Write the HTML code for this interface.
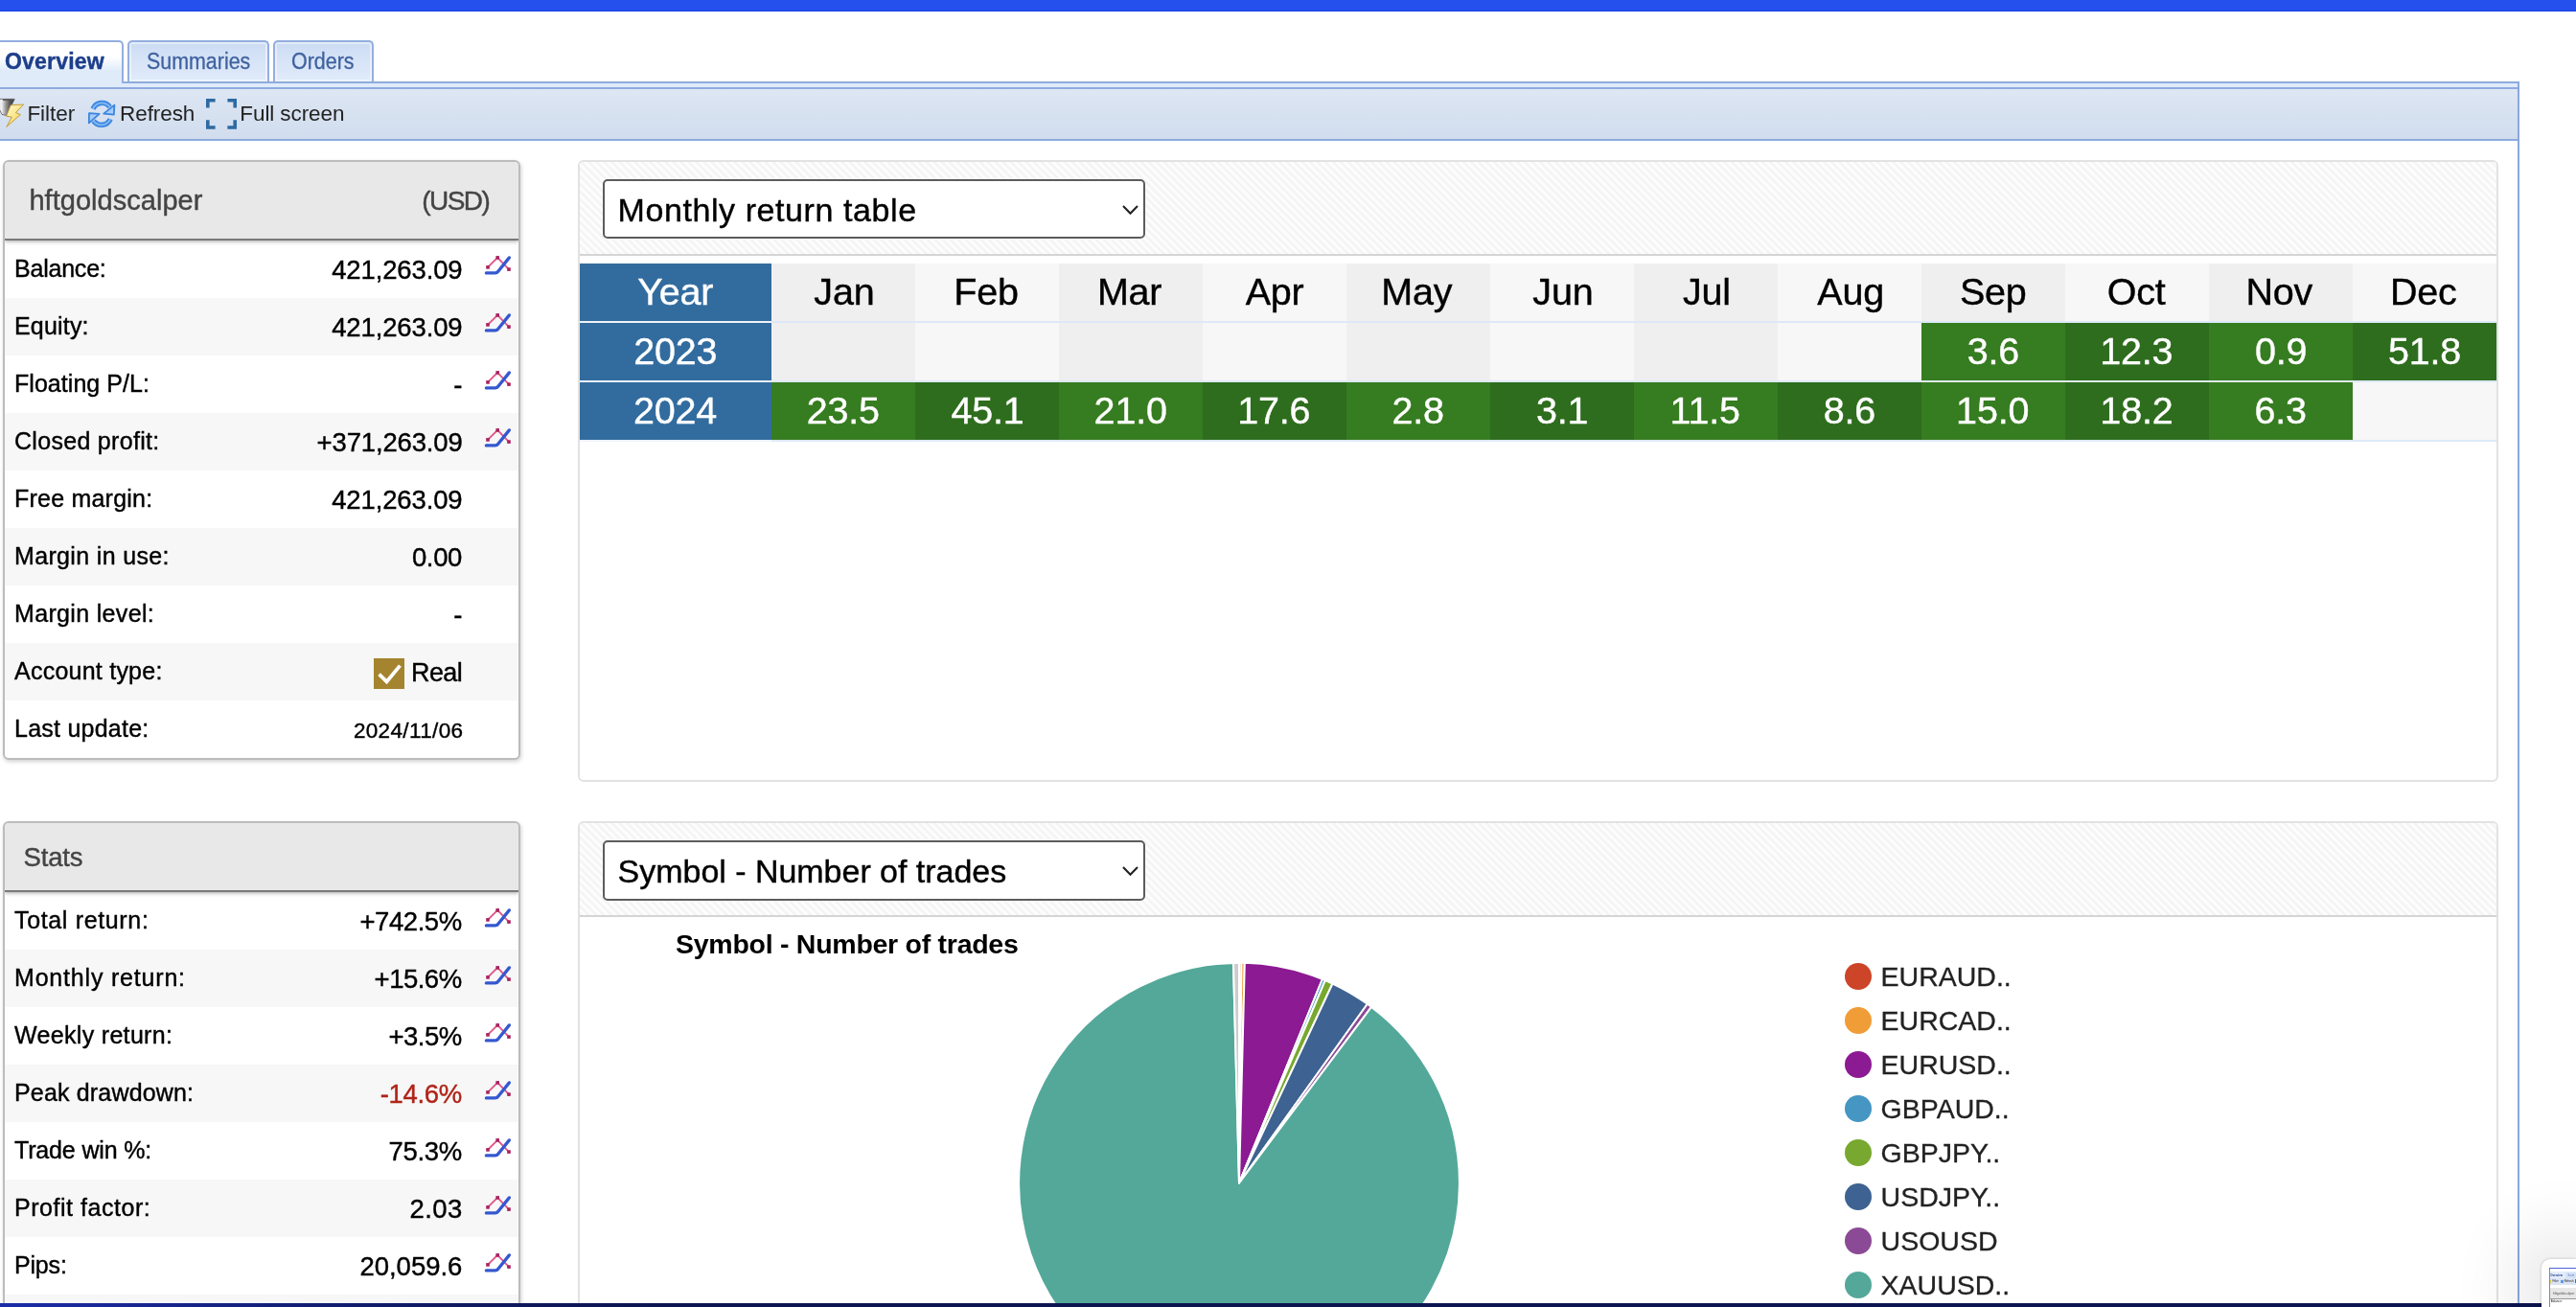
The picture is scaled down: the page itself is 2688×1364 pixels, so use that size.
<!DOCTYPE html>
<html><head><meta charset="utf-8"><title>Overview</title>
<style>
html,body{margin:0;padding:0;}
html{overflow:hidden;width:2688px;height:1364px;background:#fff;}
body{opacity:.999;width:2688px;height:1364px;position:relative;overflow:hidden;background:#fff;font-family:"Liberation Sans",sans-serif;}
.t{position:absolute;white-space:pre;line-height:1;}
.n{-webkit-text-stroke:.4px currentColor;}
.n2{-webkit-text-stroke:.3px currentColor;}
.a{position:absolute;}
.row{position:absolute;left:5px;width:536px;height:60px;}
.g{background:#f7f7f7;}
.pnl{position:absolute;left:3px;width:536px;border:2px solid #bcbcbc;border-radius:6px;box-shadow:1px 2px 4px rgba(0,0,0,.18);background:#fff;overflow:hidden;}
.ph{position:absolute;left:0;top:0;width:536px;background:#e8e8e8;border-bottom:2px solid #7a7a7a;box-shadow:0 1px 4px rgba(0,0,0,.35);}
.rp{position:absolute;left:603px;width:2000px;border:2px solid #e2e2e2;border-radius:6px;background:#fff;overflow:hidden;}
.rh{position:absolute;left:0;top:0;width:2000px;height:96px;border-bottom:2px solid #d4d4d4;background:repeating-linear-gradient(45deg,#f4f4f4 0,#f5f5f5 2px,#fdfdfd 2.8px,#fdfdfd 5px,#f4f4f4 5.66px);}
.sel{position:absolute;left:24px;top:18px;width:562px;height:58px;border:2px solid #5c5c5c;border-radius:5px;background:#fff;}
.tab{position:absolute;top:42px;height:41px;border:2px solid #93afe0;border-bottom:none;border-radius:5px 5px 0 0;}
.c{position:absolute;height:60px;}
</style></head><body>
<div class="a" style="left:0;top:0;width:2688px;height:12px;background:linear-gradient(#2550ed 0,#2550ed 10.6px,#1541e6 11.2px,#1541e6 12px)"></div>
<div class="a" style="left:0;top:85px;width:2629px;height:2px;background:#8dabde"></div>
<div class="a" style="left:0;top:87px;width:2627px;height:4px;background:#e0ebfa"></div>
<div class="tab" style="left:-10px;width:135px;height:43px;background:linear-gradient(#fff 0,#fff 35%,#e0ebfa 70%,#e0ebfa 100%)"></div>
<div class="tab" style="left:133px;width:144px;background:linear-gradient(#cbdbf3 0,#d6e3f7 40%,#e0ebfa 100%);box-shadow:inset 0 0 0 2px rgba(255,255,255,.45)"></div>
<div class="tab" style="left:285px;width:101px;background:linear-gradient(#cbdbf3 0,#d6e3f7 40%,#e0ebfa 100%);box-shadow:inset 0 0 0 2px rgba(255,255,255,.45)"></div>
<span class="t" style="left:4.92px;top:53.00px;font-size:23px;color:#1d3e8a;letter-spacing:0.218px;font-weight:bold;-webkit-text-stroke:0.4px #1d3e8a;">Overview</span>
<span class="t" style="left:152.77px;top:53.00px;font-size:23.5px;color:#3f629f;transform:scaleX(0.9112);transform-origin:0 0;-webkit-text-stroke:.3px #3f629f;">Summaries</span>
<span class="t" style="left:304.17px;top:53.00px;font-size:23.5px;color:#3f629f;transform:scaleX(0.9131);transform-origin:0 0;-webkit-text-stroke:.3px #3f629f;">Orders</span>
<div class="a" style="left:0;top:91px;width:2627px;height:52px;border:2px solid #8dabde;border-left:none;background:linear-gradient(#dee7f4 0,#d9e3f1 30%,#d1ddee 100%)"></div>
<svg class="a" style="left:0;top:96px" width="260" height="46" viewBox="0 96 260 46">
<defs>
<linearGradient id="fg" x1="0" y1="0" x2="1" y2="0"><stop offset="0" stop-color="#cfcfcf"/><stop offset=".36" stop-color="#f2f2f2"/><stop offset=".56" stop-color="#9a9a9a"/><stop offset=".8" stop-color="#4e4e4e"/><stop offset="1" stop-color="#3c3c3c"/></linearGradient>
<linearGradient id="lg" x1="0" y1="0" x2="1" y2="1"><stop offset="0" stop-color="#fffbd2"/><stop offset=".5" stop-color="#fbe68a"/><stop offset="1" stop-color="#e9b92c"/></linearGradient>
<linearGradient id="rg" x1="0" y1="0" x2="0" y2="1"><stop offset="0" stop-color="#3f86de"/><stop offset=".5" stop-color="#8fc0f4"/><stop offset="1" stop-color="#3f86de"/></linearGradient>
</defs>
<path d="M-6 103.4 L15.2 103.4 L6.9 120.6 L2 119.4 Z" fill="url(#fg)" stroke="#5a5a5a" stroke-width=".8"/><path d="M3 104.2 L14.4 104.2" stroke="#555" stroke-width="1.4"/>
<path d="M11.2 109.8 L24.6 109 L16.4 117.6 L21.3 119.6 L6.8 132.4 L12.4 122.2 L6.6 121.2 Z" fill="url(#lg)" stroke="#c49b3a" stroke-width="1"/>
<g fill="none" stroke-linecap="butt">
<path d="M97.0 113.6 A10.2 10.2 0 0 1 114.6 111.6" stroke="#3b85e0" stroke-width="5.4"/>
<path d="M115.2 124.2 A10.2 10.2 0 0 1 97.6 126.2" stroke="#3b85e0" stroke-width="5.4"/>
<path d="M97.0 113.6 A10.2 10.2 0 0 1 114.6 111.6" stroke="#7db6f3" stroke-width="2"/>
<path d="M115.2 124.2 A10.2 10.2 0 0 1 97.6 126.2" stroke="#7db6f3" stroke-width="2"/>
</g>
<path d="M119.4 109.6 L118.8 119.6 L108.2 118.6 Z" fill="#a6cdf8" stroke="#3b85e0" stroke-width="1.8" stroke-linejoin="round"/>
<path d="M92.8 128.4 L93.0 118.2 L103.6 118.8 Z" fill="#a6cdf8" stroke="#3b85e0" stroke-width="1.8" stroke-linejoin="round"/>
<g fill="none" stroke="#2d6aa3" stroke-width="3.6">
<path d="M224.6 104.8 H216.8 V112.6"/><path d="M237.4 104.8 H245.2 V112.6"/>
<path d="M224.6 133 H216.8 V125.2"/><path d="M237.4 133 H245.2 V125.2"/>
</g>
</svg>
<span class="t" style="left:28.43px;top:108.00px;font-size:22.5px;color:#222;letter-spacing:-0.050px;">Filter</span>
<span class="t" style="left:125.12px;top:108.00px;font-size:22.5px;color:#222;letter-spacing:-0.100px;">Refresh</span>
<span class="t" style="left:250.32px;top:108.00px;font-size:22.5px;color:#222;letter-spacing:-0.095px;">Full screen</span>
<div class="pnl" style="top:167px;height:622px"><div class="ph" style="height:80px"></div></div>
<div class="row g" style="top:311px;height:60px"></div>
<div class="row g" style="top:431px;height:60px"></div>
<div class="row g" style="top:551px;height:60px"></div>
<div class="row g" style="top:671px;height:60px"></div>
<span class="t n" style="left:30.40px;top:195.00px;font-size:29px;color:#444;letter-spacing:0.037px;">hftgoldscalper</span>
<span class="t n" style="left:440.15px;top:196.00px;font-size:28px;color:#444;letter-spacing:-1.519px;">(USD)</span>
<span class="t n" style="left:15.00px;top:268.00px;font-size:25px;color:#000;letter-spacing:-0.214px;">Balance:</span>
<span class="t n" style="left:346.18px;top:268.00px;font-size:27.5px;color:#000;letter-spacing:-0.128px;">421,263.09</span>
<svg class="a" style="left:504px;top:265px;filter:blur(.7px)" width="32" height="26" viewBox="0 0 32 26">
<path d="M5 13.9 L15.2 3.9 L27 16.1" fill="none" stroke="#e2588c" stroke-width="1.9"/>
<path d="M3.4 19.9 L12.6 19.9 Q14.6 19.9 16 18 L27.4 3.9" fill="none" stroke="#3558d0" stroke-width="3.3" stroke-linejoin="round" stroke-linecap="round"/>
<rect x="3.2" y="12.1" width="3.6" height="3.6" fill="#a8245f"/><rect x="13.4" y="2.1" width="3.6" height="3.6" fill="#a8245f"/><rect x="25.2" y="14.3" width="3.6" height="3.6" fill="#a8245f"/>
</svg>
<span class="t n" style="left:15.00px;top:328.00px;font-size:25px;color:#000;letter-spacing:0.179px;">Equity:</span>
<span class="t n" style="left:346.18px;top:328.00px;font-size:27.5px;color:#000;letter-spacing:-0.128px;">421,263.09</span>
<svg class="a" style="left:504px;top:325px;filter:blur(.7px)" width="32" height="26" viewBox="0 0 32 26">
<path d="M5 13.9 L15.2 3.9 L27 16.1" fill="none" stroke="#e2588c" stroke-width="1.9"/>
<path d="M3.4 19.9 L12.6 19.9 Q14.6 19.9 16 18 L27.4 3.9" fill="none" stroke="#3558d0" stroke-width="3.3" stroke-linejoin="round" stroke-linecap="round"/>
<rect x="3.2" y="12.1" width="3.6" height="3.6" fill="#a8245f"/><rect x="13.4" y="2.1" width="3.6" height="3.6" fill="#a8245f"/><rect x="25.2" y="14.3" width="3.6" height="3.6" fill="#a8245f"/>
</svg>
<span class="t n" style="left:15.00px;top:388.00px;font-size:25px;color:#000;letter-spacing:0.042px;">Floating P/L:</span>
<span class="t n" style="left:473.25px;top:388.00px;font-size:27.5px;color:#000;">-</span>
<svg class="a" style="left:504px;top:385px;filter:blur(.7px)" width="32" height="26" viewBox="0 0 32 26">
<path d="M5 13.9 L15.2 3.9 L27 16.1" fill="none" stroke="#e2588c" stroke-width="1.9"/>
<path d="M3.4 19.9 L12.6 19.9 Q14.6 19.9 16 18 L27.4 3.9" fill="none" stroke="#3558d0" stroke-width="3.3" stroke-linejoin="round" stroke-linecap="round"/>
<rect x="3.2" y="12.1" width="3.6" height="3.6" fill="#a8245f"/><rect x="13.4" y="2.1" width="3.6" height="3.6" fill="#a8245f"/><rect x="25.2" y="14.3" width="3.6" height="3.6" fill="#a8245f"/>
</svg>
<span class="t n" style="left:15.00px;top:448.00px;font-size:25px;color:#000;letter-spacing:0.300px;">Closed profit:</span>
<span class="t n" style="left:330.62px;top:448.00px;font-size:27.5px;color:#000;letter-spacing:-0.160px;">+371,263.09</span>
<svg class="a" style="left:504px;top:445px;filter:blur(.7px)" width="32" height="26" viewBox="0 0 32 26">
<path d="M5 13.9 L15.2 3.9 L27 16.1" fill="none" stroke="#e2588c" stroke-width="1.9"/>
<path d="M3.4 19.9 L12.6 19.9 Q14.6 19.9 16 18 L27.4 3.9" fill="none" stroke="#3558d0" stroke-width="3.3" stroke-linejoin="round" stroke-linecap="round"/>
<rect x="3.2" y="12.1" width="3.6" height="3.6" fill="#a8245f"/><rect x="13.4" y="2.1" width="3.6" height="3.6" fill="#a8245f"/><rect x="25.2" y="14.3" width="3.6" height="3.6" fill="#a8245f"/>
</svg>
<span class="t n" style="left:15.00px;top:508.00px;font-size:25px;color:#000;letter-spacing:0.220px;">Free margin:</span>
<span class="t n" style="left:346.18px;top:508.00px;font-size:27.5px;color:#000;letter-spacing:-0.128px;">421,263.09</span>
<span class="t n" style="left:15.00px;top:568.00px;font-size:25px;color:#000;letter-spacing:0.342px;">Margin in use:</span>
<span class="t n" style="left:429.90px;top:568.00px;font-size:27.5px;color:#000;letter-spacing:-0.333px;">0.00</span>
<span class="t n" style="left:15.00px;top:628.00px;font-size:25px;color:#000;letter-spacing:0.335px;">Margin level:</span>
<span class="t n" style="left:473.25px;top:628.00px;font-size:27.5px;color:#000;">-</span>
<span class="t n" style="left:15.00px;top:688.00px;font-size:25px;color:#000;letter-spacing:0.240px;">Account type:</span>
<span class="t n" style="left:15.00px;top:748.00px;font-size:25px;color:#000;letter-spacing:0.241px;">Last update:</span>
<div class="a" style="left:390px;top:687px;width:32px;height:32px;background:#a5842f"></div>
<svg class="a" style="left:390px;top:687px" width="32" height="32" viewBox="0 0 32 32"><path d="M5.6 16.6 L13.5 24.4 L27.4 7.6" fill="none" stroke="#fff" stroke-width="3.8"/></svg>
<span class="t n" style="left:429.05px;top:689.00px;font-size:27px;color:#000;letter-spacing:-0.633px;">Real</span>
<span class="t n" style="left:368.88px;top:752.00px;font-size:22.5px;color:#000;letter-spacing:0.361px;">2024/11/06</span>
<div class="pnl" style="top:857px;height:505px;border-bottom:none;border-radius:6px 6px 0 0"><div class="ph" style="height:70px"></div></div>
<div class="row g" style="top:991px;height:60px"></div>
<div class="row g" style="top:1111px;height:60px"></div>
<div class="row g" style="top:1231px;height:60px"></div>
<div class="row g" style="top:1351px;height:13px"></div>
<span class="t n" style="left:24.55px;top:881.00px;font-size:27.5px;color:#444;letter-spacing:-0.169px;">Stats</span>
<span class="t n" style="left:15.00px;top:948.00px;font-size:25px;color:#000;letter-spacing:0.654px;">Total return:</span>
<span class="t n" style="left:375.43px;top:948.00px;font-size:27.5px;color:#000;letter-spacing:-0.433px;">+742.5%</span>
<svg class="a" style="left:503.5px;top:945.5px;filter:blur(.7px)" width="32" height="26" viewBox="0 0 32 26">
<path d="M5 13.9 L15.2 3.9 L27 16.1" fill="none" stroke="#e2588c" stroke-width="1.9"/>
<path d="M3.4 19.9 L12.6 19.9 Q14.6 19.9 16 18 L27.4 3.9" fill="none" stroke="#3558d0" stroke-width="3.3" stroke-linejoin="round" stroke-linecap="round"/>
<rect x="3.2" y="12.1" width="3.6" height="3.6" fill="#a8245f"/><rect x="13.4" y="2.1" width="3.6" height="3.6" fill="#a8245f"/><rect x="25.2" y="14.3" width="3.6" height="3.6" fill="#a8245f"/>
</svg>
<span class="t n" style="left:15.00px;top:1008.00px;font-size:25px;color:#000;letter-spacing:0.809px;">Monthly return:</span>
<span class="t n" style="left:390.62px;top:1008.00px;font-size:27.5px;color:#000;letter-spacing:-0.510px;">+15.6%</span>
<svg class="a" style="left:503.5px;top:1005.5px;filter:blur(.7px)" width="32" height="26" viewBox="0 0 32 26">
<path d="M5 13.9 L15.2 3.9 L27 16.1" fill="none" stroke="#e2588c" stroke-width="1.9"/>
<path d="M3.4 19.9 L12.6 19.9 Q14.6 19.9 16 18 L27.4 3.9" fill="none" stroke="#3558d0" stroke-width="3.3" stroke-linejoin="round" stroke-linecap="round"/>
<rect x="3.2" y="12.1" width="3.6" height="3.6" fill="#a8245f"/><rect x="13.4" y="2.1" width="3.6" height="3.6" fill="#a8245f"/><rect x="25.2" y="14.3" width="3.6" height="3.6" fill="#a8245f"/>
</svg>
<span class="t n" style="left:15.00px;top:1068.00px;font-size:25px;color:#000;letter-spacing:0.325px;">Weekly return:</span>
<span class="t n" style="left:405.52px;top:1068.00px;font-size:27.5px;color:#000;letter-spacing:-0.519px;">+3.5%</span>
<svg class="a" style="left:503.5px;top:1065.5px;filter:blur(.7px)" width="32" height="26" viewBox="0 0 32 26">
<path d="M5 13.9 L15.2 3.9 L27 16.1" fill="none" stroke="#e2588c" stroke-width="1.9"/>
<path d="M3.4 19.9 L12.6 19.9 Q14.6 19.9 16 18 L27.4 3.9" fill="none" stroke="#3558d0" stroke-width="3.3" stroke-linejoin="round" stroke-linecap="round"/>
<rect x="3.2" y="12.1" width="3.6" height="3.6" fill="#a8245f"/><rect x="13.4" y="2.1" width="3.6" height="3.6" fill="#a8245f"/><rect x="25.2" y="14.3" width="3.6" height="3.6" fill="#a8245f"/>
</svg>
<span class="t n" style="left:15.00px;top:1128.00px;font-size:25px;color:#000;letter-spacing:0.169px;">Peak drawdown:</span>
<span class="t n" style="left:396.75px;top:1128.00px;font-size:27.5px;color:#b02418;letter-spacing:-0.335px;">-14.6%</span>
<svg class="a" style="left:503.5px;top:1125.5px;filter:blur(.7px)" width="32" height="26" viewBox="0 0 32 26">
<path d="M5 13.9 L15.2 3.9 L27 16.1" fill="none" stroke="#e2588c" stroke-width="1.9"/>
<path d="M3.4 19.9 L12.6 19.9 Q14.6 19.9 16 18 L27.4 3.9" fill="none" stroke="#3558d0" stroke-width="3.3" stroke-linejoin="round" stroke-linecap="round"/>
<rect x="3.2" y="12.1" width="3.6" height="3.6" fill="#a8245f"/><rect x="13.4" y="2.1" width="3.6" height="3.6" fill="#a8245f"/><rect x="25.2" y="14.3" width="3.6" height="3.6" fill="#a8245f"/>
</svg>
<span class="t n" style="left:15.00px;top:1188.00px;font-size:25px;color:#000;letter-spacing:-0.157px;">Trade win %:</span>
<span class="t n" style="left:405.52px;top:1188.00px;font-size:27.5px;color:#000;letter-spacing:-0.331px;">75.3%</span>
<svg class="a" style="left:503.5px;top:1185.5px;filter:blur(.7px)" width="32" height="26" viewBox="0 0 32 26">
<path d="M5 13.9 L15.2 3.9 L27 16.1" fill="none" stroke="#e2588c" stroke-width="1.9"/>
<path d="M3.4 19.9 L12.6 19.9 Q14.6 19.9 16 18 L27.4 3.9" fill="none" stroke="#3558d0" stroke-width="3.3" stroke-linejoin="round" stroke-linecap="round"/>
<rect x="3.2" y="12.1" width="3.6" height="3.6" fill="#a8245f"/><rect x="13.4" y="2.1" width="3.6" height="3.6" fill="#a8245f"/><rect x="25.2" y="14.3" width="3.6" height="3.6" fill="#a8245f"/>
</svg>
<span class="t n" style="left:15.00px;top:1248.00px;font-size:25px;color:#000;letter-spacing:0.538px;">Profit factor:</span>
<span class="t n" style="left:427.62px;top:1248.00px;font-size:27.5px;color:#000;letter-spacing:0.400px;">2.03</span>
<svg class="a" style="left:503.5px;top:1245.5px;filter:blur(.7px)" width="32" height="26" viewBox="0 0 32 26">
<path d="M5 13.9 L15.2 3.9 L27 16.1" fill="none" stroke="#e2588c" stroke-width="1.9"/>
<path d="M3.4 19.9 L12.6 19.9 Q14.6 19.9 16 18 L27.4 3.9" fill="none" stroke="#3558d0" stroke-width="3.3" stroke-linejoin="round" stroke-linecap="round"/>
<rect x="3.2" y="12.1" width="3.6" height="3.6" fill="#a8245f"/><rect x="13.4" y="2.1" width="3.6" height="3.6" fill="#a8245f"/><rect x="25.2" y="14.3" width="3.6" height="3.6" fill="#a8245f"/>
</svg>
<span class="t n" style="left:15.00px;top:1308.00px;font-size:25px;color:#000;letter-spacing:-0.188px;">Pips:</span>
<span class="t n" style="left:375.43px;top:1308.00px;font-size:27.5px;color:#000;letter-spacing:-0.014px;">20,059.6</span>
<svg class="a" style="left:503.5px;top:1305.5px;filter:blur(.7px)" width="32" height="26" viewBox="0 0 32 26">
<path d="M5 13.9 L15.2 3.9 L27 16.1" fill="none" stroke="#e2588c" stroke-width="1.9"/>
<path d="M3.4 19.9 L12.6 19.9 Q14.6 19.9 16 18 L27.4 3.9" fill="none" stroke="#3558d0" stroke-width="3.3" stroke-linejoin="round" stroke-linecap="round"/>
<rect x="3.2" y="12.1" width="3.6" height="3.6" fill="#a8245f"/><rect x="13.4" y="2.1" width="3.6" height="3.6" fill="#a8245f"/><rect x="25.2" y="14.3" width="3.6" height="3.6" fill="#a8245f"/>
</svg>
<div class="rp" style="top:167px;height:645px"><div class="rh"></div><div class="sel"></div></div>
<span class="t n" style="left:644.55px;top:202.00px;font-size:34px;color:#000;letter-spacing:0.582px;">Monthly return table</span>
<svg class="a" style="left:1168.5px;top:211.5px" width="22" height="14" viewBox="0 0 22 14"><path d="M3 3 L10.5 10.7 L18 3" fill="none" stroke="#222" stroke-width="2.1"/></svg>
<div class="a" style="left:605px;top:335px;width:2000px;height:2px;background:#dde9f8"></div>
<div class="a" style="left:605px;top:335px;width:200px;height:2px;background:#eef3f8"></div>
<div class="a" style="left:605px;top:397px;width:2000px;height:2px;background:#dde9f8"></div>
<div class="a" style="left:605px;top:397px;width:200px;height:2px;background:#eef3f8"></div>
<div class="a" style="left:605px;top:459px;width:2000px;height:2px;background:#dde9f8"></div>
<div class="a" style="left:605px;top:459px;width:200px;height:2px;background:#eef3f8"></div>
<div class="c" style="left:605px;top:275px;width:200px;background:#326c9f"></div>
<span class="t n" style="left:665.30px;top:285.00px;font-size:39.5px;color:#fff;letter-spacing:-0.200px;">Year</span>
<div class="c" style="left:805px;top:275px;width:150px;background:#efefef"></div>
<span class="t n" style="left:849.33px;top:285.00px;font-size:39.5px;color:#000;letter-spacing:-0.200px;">Jan</span>
<div class="c" style="left:955px;top:275px;width:150px;background:#f7f7f7"></div>
<span class="t n" style="left:995.33px;top:285.00px;font-size:39.5px;color:#000;letter-spacing:-0.200px;">Feb</span>
<div class="c" style="left:1105px;top:275px;width:150px;background:#efefef"></div>
<span class="t n" style="left:1144.89px;top:285.00px;font-size:39.5px;color:#000;letter-spacing:-0.200px;">Mar</span>
<div class="c" style="left:1255px;top:275px;width:150px;background:#f7f7f7"></div>
<span class="t n" style="left:1299.70px;top:285.00px;font-size:39.5px;color:#000;letter-spacing:-0.200px;">Apr</span>
<div class="c" style="left:1405px;top:275px;width:150px;background:#efefef"></div>
<span class="t n" style="left:1441.33px;top:285.00px;font-size:39.5px;color:#000;letter-spacing:-0.200px;">May</span>
<div class="c" style="left:1555px;top:275px;width:150px;background:#f7f7f7"></div>
<span class="t n" style="left:1599.33px;top:285.00px;font-size:39.5px;color:#000;letter-spacing:-0.200px;">Jun</span>
<div class="c" style="left:1705px;top:275px;width:150px;background:#efefef"></div>
<span class="t n" style="left:1755.95px;top:285.00px;font-size:39.5px;color:#000;letter-spacing:-0.200px;">Jul</span>
<div class="c" style="left:1855px;top:275px;width:150px;background:#f7f7f7"></div>
<span class="t n" style="left:1896.26px;top:285.00px;font-size:39.5px;color:#000;letter-spacing:-0.200px;">Aug</span>
<div class="c" style="left:2005px;top:275px;width:150px;background:#efefef"></div>
<span class="t n" style="left:2044.95px;top:285.00px;font-size:39.5px;color:#000;letter-spacing:-0.200px;">Sep</span>
<div class="c" style="left:2155px;top:275px;width:150px;background:#f7f7f7"></div>
<span class="t n" style="left:2198.64px;top:285.00px;font-size:39.5px;color:#000;letter-spacing:-0.200px;">Oct</span>
<div class="c" style="left:2305px;top:275px;width:150px;background:#efefef"></div>
<span class="t n" style="left:2343.51px;top:285.00px;font-size:39.5px;color:#000;letter-spacing:-0.200px;">Nov</span>
<div class="c" style="left:2455px;top:275px;width:150px;background:#f7f7f7"></div>
<span class="t n" style="left:2493.95px;top:285.00px;font-size:39.5px;color:#000;letter-spacing:-0.200px;">Dec</span>
<div class="c" style="left:605px;top:337px;width:200px;background:#326c9f"></div>
<span class="t n" style="left:661.24px;top:347.00px;font-size:39.5px;color:#fff;letter-spacing:-0.200px;">2023</span>
<div class="c" style="left:805px;top:337px;width:150px;background:#efefef"></div>
<div class="c" style="left:955px;top:337px;width:150px;background:#f7f7f7"></div>
<div class="c" style="left:1105px;top:337px;width:150px;background:#efefef"></div>
<div class="c" style="left:1255px;top:337px;width:150px;background:#f7f7f7"></div>
<div class="c" style="left:1405px;top:337px;width:150px;background:#efefef"></div>
<div class="c" style="left:1555px;top:337px;width:150px;background:#f7f7f7"></div>
<div class="c" style="left:1705px;top:337px;width:150px;background:#efefef"></div>
<div class="c" style="left:1855px;top:337px;width:150px;background:#f7f7f7"></div>
<div class="c" style="left:2005px;top:337px;width:150px;background:#367c20"></div>
<span class="t n" style="left:2052.82px;top:347.00px;font-size:39.5px;color:#fff;letter-spacing:-0.200px;">3.6</span>
<div class="c" style="left:2155px;top:337px;width:150px;background:#2e6d1d"></div>
<span class="t n" style="left:2191.24px;top:347.00px;font-size:39.5px;color:#fff;letter-spacing:-0.200px;">12.3</span>
<div class="c" style="left:2305px;top:337px;width:150px;background:#367c20"></div>
<span class="t n" style="left:2352.89px;top:347.00px;font-size:39.5px;color:#fff;letter-spacing:-0.200px;">0.9</span>
<div class="c" style="left:2455px;top:337px;width:150px;background:#2e6d1d"></div>
<span class="t n" style="left:2491.93px;top:347.00px;font-size:39.5px;color:#fff;letter-spacing:-0.200px;">51.8</span>
<div class="c" style="left:605px;top:399px;width:200px;background:#326c9f"></div>
<span class="t n" style="left:660.92px;top:409.00px;font-size:39.5px;color:#fff;letter-spacing:-0.200px;">2024</span>
<div class="c" style="left:805px;top:399px;width:150px;background:#367c20"></div>
<span class="t n" style="left:841.67px;top:409.00px;font-size:39.5px;color:#fff;letter-spacing:-0.200px;">23.5</span>
<div class="c" style="left:955px;top:399px;width:150px;background:#2e6d1d"></div>
<span class="t n" style="left:992.42px;top:409.00px;font-size:39.5px;color:#fff;letter-spacing:-0.200px;">45.1</span>
<div class="c" style="left:1105px;top:399px;width:150px;background:#367c20"></div>
<span class="t n" style="left:1141.61px;top:409.00px;font-size:39.5px;color:#fff;letter-spacing:-0.200px;">21.0</span>
<div class="c" style="left:1255px;top:399px;width:150px;background:#2e6d1d"></div>
<span class="t n" style="left:1291.24px;top:409.00px;font-size:39.5px;color:#fff;letter-spacing:-0.200px;">17.6</span>
<div class="c" style="left:1405px;top:399px;width:150px;background:#367c20"></div>
<span class="t n" style="left:1452.58px;top:409.00px;font-size:39.5px;color:#fff;letter-spacing:-0.200px;">2.8</span>
<div class="c" style="left:1555px;top:399px;width:150px;background:#2e6d1d"></div>
<span class="t n" style="left:1602.95px;top:409.00px;font-size:39.5px;color:#fff;letter-spacing:-0.200px;">3.1</span>
<div class="c" style="left:1705px;top:399px;width:150px;background:#367c20"></div>
<span class="t n" style="left:1742.61px;top:409.00px;font-size:39.5px;color:#fff;letter-spacing:-0.200px;">11.5</span>
<div class="c" style="left:1855px;top:399px;width:150px;background:#2e6d1d"></div>
<span class="t n" style="left:1902.70px;top:409.00px;font-size:39.5px;color:#fff;letter-spacing:-0.200px;">8.6</span>
<div class="c" style="left:2005px;top:399px;width:150px;background:#367c20"></div>
<span class="t n" style="left:2041.11px;top:409.00px;font-size:39.5px;color:#fff;letter-spacing:-0.200px;">15.0</span>
<div class="c" style="left:2155px;top:399px;width:150px;background:#2e6d1d"></div>
<span class="t n" style="left:2191.36px;top:409.00px;font-size:39.5px;color:#fff;letter-spacing:-0.200px;">18.2</span>
<div class="c" style="left:2305px;top:399px;width:150px;background:#367c20"></div>
<span class="t n" style="left:2352.57px;top:409.00px;font-size:39.5px;color:#fff;letter-spacing:-0.200px;">6.3</span>
<div class="c" style="left:2455px;top:399px;width:150px;background:#f7f7f7"></div>
<div class="rp" style="top:857px;height:505px;border-bottom:none;border-radius:6px 6px 0 0"><div class="rh"></div><div class="sel" style="top:18px;height:58.5px"></div></div>
<span class="t n" style="left:644.58px;top:892.00px;font-size:34px;color:#000;letter-spacing:-0.028px;">Symbol - Number of trades</span>
<svg class="a" style="left:1168.5px;top:901.5px" width="22" height="14" viewBox="0 0 22 14"><path d="M3 3 L10.5 10.7 L18 3" fill="none" stroke="#222" stroke-width="2.1"/></svg>
<span class="t" style="left:705.02px;top:971.00px;font-size:28.5px;color:#000;letter-spacing:-0.269px;font-weight:bold;">Symbol - Number of trades</span>
<svg class="a" style="left:1040px;top:990px" width="520" height="374" viewBox="1040 990 520 374">
<path d="M1293.00 1234.70 L1293.00 1004.80 A229.9 229.9 0 0 1 1295.41 1004.81 Z" fill="#cc4528" stroke="#fff" stroke-width="2" stroke-linejoin="round"/>
<path d="M1293.00 1234.70 L1295.41 1004.81 A229.9 229.9 0 0 1 1298.82 1004.87 Z" fill="#f09d38" stroke="#fff" stroke-width="2" stroke-linejoin="round"/>
<path d="M1293.00 1234.70 L1298.82 1004.87 A229.9 229.9 0 0 1 1379.87 1021.84 Z" fill="#8b1a93" stroke="#fff" stroke-width="2" stroke-linejoin="round"/>
<path d="M1293.00 1234.70 L1379.87 1021.84 A229.9 229.9 0 0 1 1382.83 1023.08 Z" fill="#4596c2" stroke="#fff" stroke-width="2" stroke-linejoin="round"/>
<path d="M1293.00 1234.70 L1382.83 1023.08 A229.9 229.9 0 0 1 1390.52 1026.51 Z" fill="#78a82f" stroke="#fff" stroke-width="2" stroke-linejoin="round"/>
<path d="M1293.00 1234.70 L1390.52 1026.51 A229.9 229.9 0 0 1 1426.83 1047.77 Z" fill="#3e6291" stroke="#fff" stroke-width="2" stroke-linejoin="round"/>
<path d="M1293.00 1234.70 L1426.83 1047.77 A229.9 229.9 0 0 1 1431.04 1050.85 Z" fill="#8b4a95" stroke="#fff" stroke-width="2" stroke-linejoin="round"/>
<path d="M1293.00 1234.70 L1431.04 1050.85 A229.9 229.9 0 1 1 1286.98 1004.88 Z" fill="#53a899" stroke="#fff" stroke-width="2" stroke-linejoin="round"/>
<path d="M1293.00 1234.70 L1286.98 1004.88 A229.9 229.9 0 0 1 1293.00 1004.80 Z" fill="#cccccc" stroke="#fff" stroke-width="2" stroke-linejoin="round"/>
</svg>
<div class="a" style="left:1924.9px;top:1004.80px;width:28.2px;height:28.2px;border-radius:50%;background:#cc4528"></div>
<span class="t n2" style="left:1962.60px;top:1005.00px;font-size:28.5px;color:#222;">EURAUD..</span>
<div class="a" style="left:1924.9px;top:1050.85px;width:28.2px;height:28.2px;border-radius:50%;background:#f09d38"></div>
<span class="t n2" style="left:1962.60px;top:1051.00px;font-size:28.5px;color:#222;">EURCAD..</span>
<div class="a" style="left:1924.9px;top:1096.90px;width:28.2px;height:28.2px;border-radius:50%;background:#8b1a93"></div>
<span class="t n2" style="left:1962.60px;top:1097.00px;font-size:28.5px;color:#222;">EURUSD..</span>
<div class="a" style="left:1924.9px;top:1142.95px;width:28.2px;height:28.2px;border-radius:50%;background:#4596c2"></div>
<span class="t n2" style="left:1962.60px;top:1143.00px;font-size:28.5px;color:#222;">GBPAUD..</span>
<div class="a" style="left:1924.9px;top:1189.00px;width:28.2px;height:28.2px;border-radius:50%;background:#78a82f"></div>
<span class="t n2" style="left:1962.60px;top:1189.00px;font-size:28.5px;color:#222;">GBPJPY..</span>
<div class="a" style="left:1924.9px;top:1235.05px;width:28.2px;height:28.2px;border-radius:50%;background:#3e6291"></div>
<span class="t n2" style="left:1962.60px;top:1235.00px;font-size:28.5px;color:#222;">USDJPY..</span>
<div class="a" style="left:1924.9px;top:1281.10px;width:28.2px;height:28.2px;border-radius:50%;background:#8b4a95"></div>
<span class="t n2" style="left:1962.60px;top:1281.00px;font-size:28.5px;color:#222;">USOUSD</span>
<div class="a" style="left:1924.9px;top:1327.15px;width:28.2px;height:28.2px;border-radius:50%;background:#53a899"></div>
<span class="t n2" style="left:1962.60px;top:1327.00px;font-size:28.5px;color:#222;">XAUUSD..</span>
<div class="a" style="left:2627px;top:85px;width:2px;height:1279px;background:#8aa8df"></div>
<div class="a" style="left:0;top:1360px;width:2652px;height:4px;background:linear-gradient(90deg,#1b2da8 0,#17268f 160px,#101b68 400px,#0c1550 700px,#0c1550 100%)"></div>
<div class="a" style="left:2652px;top:1314px;width:36px;height:50px;border-radius:9px 0 0 0;background:#fff;box-shadow:0 0 3px rgba(0,0,0,.25),0 0 70px 25px rgba(0,0,0,.10)"></div>
<div class="a" style="left:2660px;top:1322.6px;width:27px;height:41.4px;background:#fff;border-left:1px solid #8a8a8a"></div>
<div class="a" style="left:2660px;top:1322.6px;width:28px;height:1.5px;background:#4a63d8"></div>
<div class="a" style="left:2661px;top:1327.4px;width:27px;height:6.4px;background:#e4edfb"></div>
<div class="a" style="left:2676.5px;top:1327.8px;width:11.5px;height:6px;background:#d6e2f6"></div>
<div class="a" style="left:2661px;top:1334.2px;width:27px;height:6.8px;background:#dae4f3"></div>
<div class="a" style="left:2661px;top:1343.5px;width:27px;height:11px;background:#e7e7e7;border-bottom:1px solid #999"></div>
<div class="a" style="left:2660.9px;top:1335.6px;width:1.6px;height:3.4px;background:#e8c84a;filter:blur(0.5px)"></div><div class="a" style="left:2671.9px;top:1335.6px;width:2.8px;height:3.6px;background:#5a9be8;filter:blur(0.5px)"></div><div class="a" style="left:2686.6px;top:1335.4px;width:1.4px;height:4px;background:#3b78b8;filter:blur(0.5px)"></div>
<span class="t" style="left:2661.28px;top:1329.54px;font-size:2.9px;color:#1d3e8a;letter-spacing:-0.018px;filter:blur(.3px);font-weight:bold;">Overview</span>
<span class="t" style="left:2679.47px;top:1329.54px;font-size:2.9px;color:#5676b0;letter-spacing:0.388px;filter:blur(.3px);">Sum</span>
<span class="t" style="left:2663.45px;top:1336.12px;font-size:2.8px;color:#222;letter-spacing:0.025px;filter:blur(.3px);">Filter</span>
<span class="t" style="left:2675.65px;top:1336.12px;font-size:2.8px;color:#222;letter-spacing:0.008px;filter:blur(.3px);">Refresh</span>
<span class="t" style="left:2663.75px;top:1348.54px;font-size:3.6px;color:#555;letter-spacing:0.027px;filter:blur(.3px);">hftgoldscalper</span>
<span class="t" style="left:2661.75px;top:1356.94px;font-size:2.9px;color:#000;letter-spacing:0.096px;filter:blur(.3px);">Balance:</span>
</body></html>
